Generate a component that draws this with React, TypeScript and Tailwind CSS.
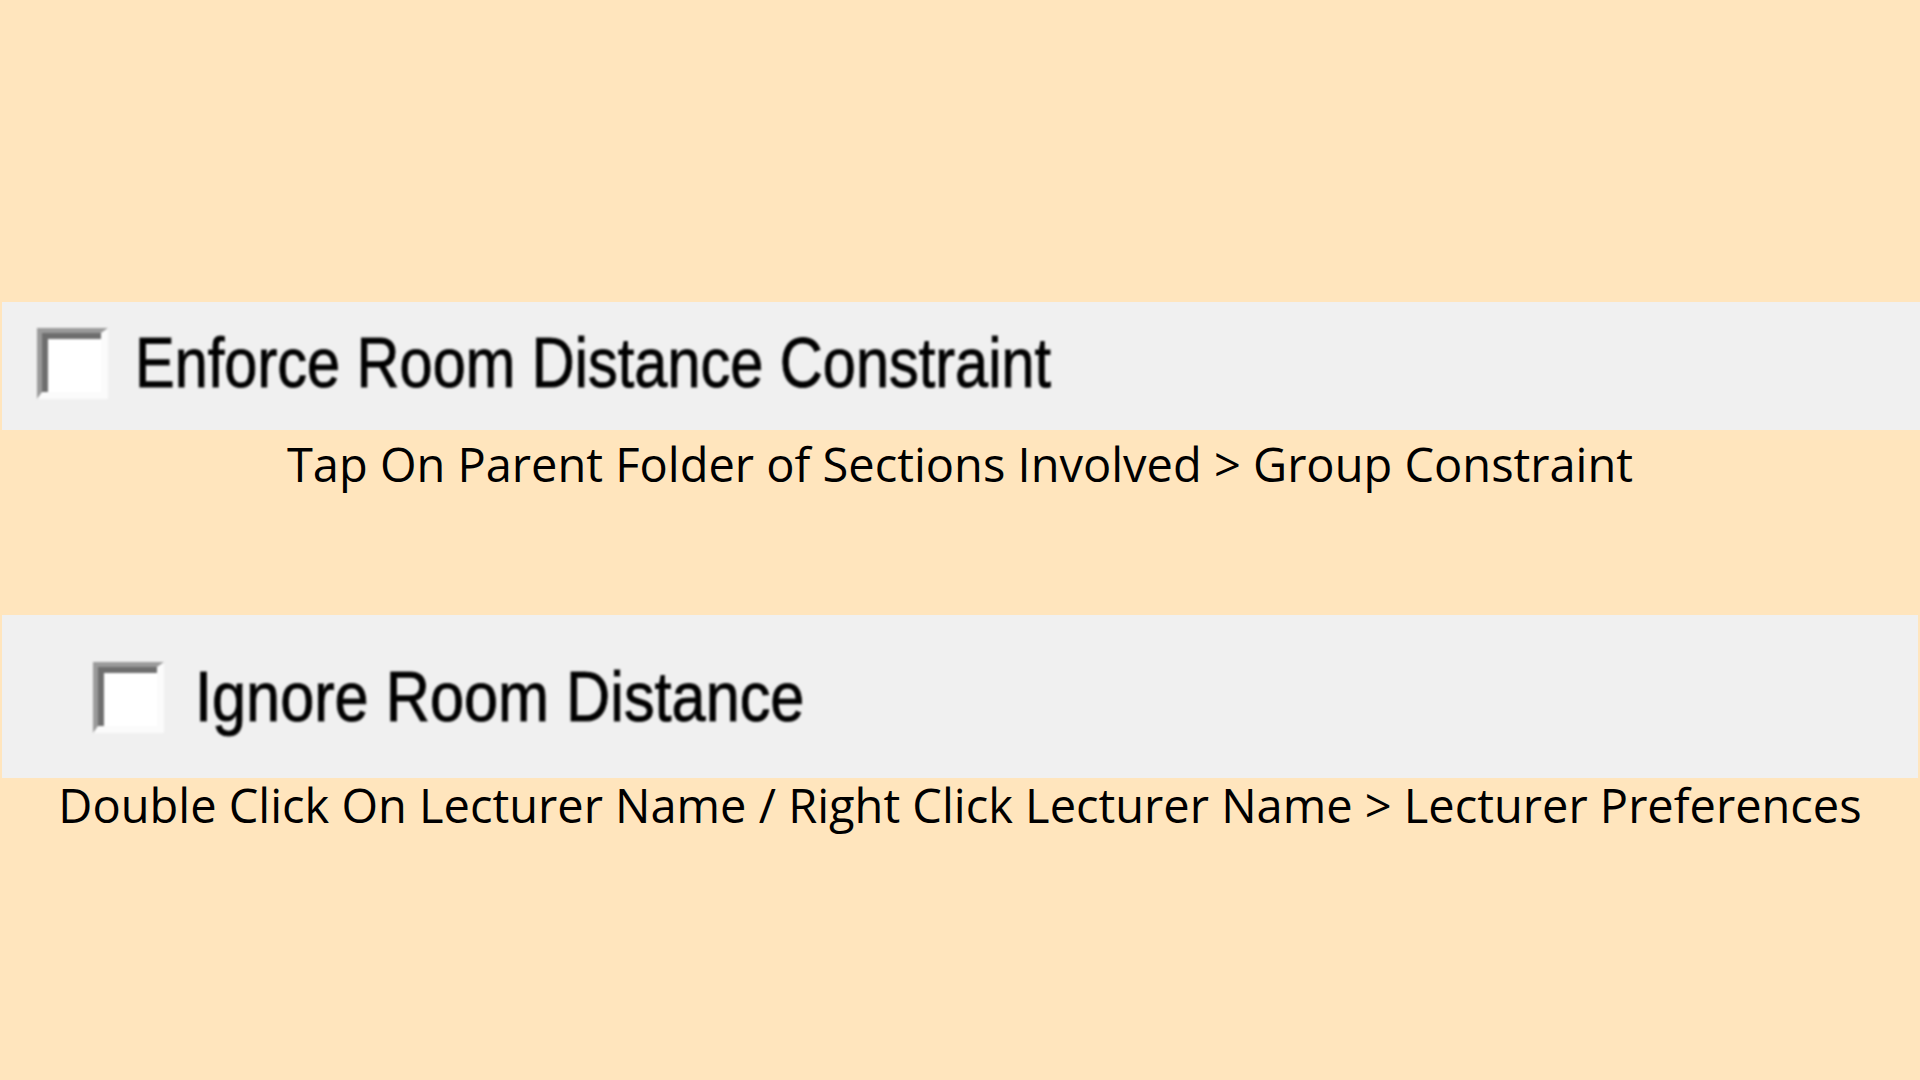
import React from "react";

type OptionRowProps = {
  label: string;
  className: string;
  labelClassName: string;
};

// Classic sunken Windows-style checkbox, blown up
const ClassicCheckbox = () => (
  <div className="w-[71px] h-[71px] shrink-0 border-t-[5px] border-l-[5px] border-r-[7px] border-b-[7px] border-t-[#9a9a9a] border-l-[#9a9a9a] border-r-[#fbfbfb] border-b-[#fbfbfb]">
    <div className="w-full h-full border-t-[6px] border-l-[6px] border-[#6e6e6e] bg-white" />
  </div>
);

const OptionRow = ({ label, className, labelClassName }: OptionRowProps) => (
  <div className={`flex items-start bg-[#f0f0f0] ${className}`}>
    <div className="flex items-start blur-[1px]">
      <ClassicCheckbox />
      <span
        className={`block text-[70px] leading-[70px] text-black whitespace-nowrap origin-left [-webkit-text-stroke:1px_#111] font-['Liberation_Sans',Arial,sans-serif] ${labelClassName}`}
      >
        {label}
      </span>
    </div>
  </div>
);

const Caption = ({ text, className }: { text: string; className: string }) => (
  <p
    className={`text-center text-[47px] leading-[47px] text-black whitespace-nowrap font-['Open_Sans','Noto_Sans',sans-serif] ${className}`}
  >
    {text}
  </p>
);

const App = () => {
  return (
    <div className="w-full min-h-screen h-[1080px] overflow-hidden bg-[#ffe5bd] flex flex-col pt-[302px]">
      <OptionRow
        label="Enforce Room Distance Constraint"
        className="h-[128px] ml-[2px] pl-[35px] pt-[26px]"
        labelClassName="ml-[27px] scale-x-[0.85]"
      />
      <Caption
        text="Tap On Parent Folder of Sections Involved > Group Constraint"
        className="mt-[11px]"
      />

      <OptionRow
        label="Ignore Room Distance"
        className="h-[163px] ml-[2px] mr-[2px] mt-[127px] pl-[91px] pt-[47px]"
        labelClassName="ml-[31px] scale-x-[0.875]"
      />
      <Caption
        text="Double Click On Lecturer Name / Right Click Lecturer Name > Lecturer Preferences"
        className="mt-[4px]"
      />
    </div>
  );
};

export default App;
